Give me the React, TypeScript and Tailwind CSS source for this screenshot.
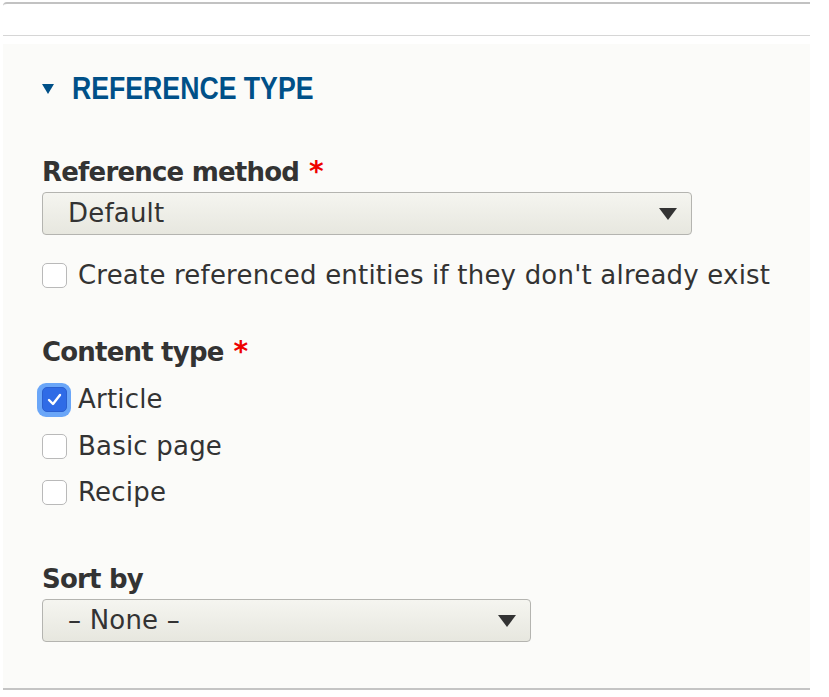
import React from 'react';

const font = { fontFamily: '"DejaVu Sans", Verdana, sans-serif' };

function Checkbox({ checked }: { checked?: boolean }) {
  if (checked) {
    return (
      <span className="flex h-[34px] w-[34px] shrink-0 items-center justify-center rounded-[9px] bg-[#6aa6f8] -ml-[5px] -mr-[4px]">
        <span className="flex h-[25px] w-[25px] items-center justify-center rounded-[5px] bg-[#2f6be6] border border-[#2a5fd0]">
          <svg width="15" height="13" viewBox="0 0 15 13">
            <path d="M2 7 L6 11 L13 2" fill="none" stroke="#fff" strokeWidth="2.4" strokeLinecap="round" strokeLinejoin="round" />
          </svg>
        </span>
      </span>
    );
  }
  return <span className="h-[25px] w-[25px] shrink-0 rounded-[5px] border border-[#b9b9b9] bg-white" />;
}

function Select({ value, width }: { value: string; width: string }) {
  return (
    <div className={`mt-[4px] flex h-[43px] items-center justify-between rounded-[4px] border border-[#b4b4b0] bg-gradient-to-b from-[#f5f5f0] to-[#e7e7df] pl-[25px] pr-[14px] ${width}`}>
      <span className="text-[26px] tracking-[0.2px] text-[#333]">{value}</span>
      <svg width="18" height="12" viewBox="0 0 18 12">
        <path d="M0 0 H18 L9 12 Z" fill="#333" />
      </svg>
    </div>
  );
}

function Label({ text, required }: { text: string; required?: boolean }) {
  return (
    <div className="flex items-center gap-[10px] text-[26px] font-bold tracking-[-0.8px] text-[#333] leading-[32px]">
      <span>{text}</span>
      {required && <span className="text-[#e00] text-[28px]">*</span>}
    </div>
  );
}

function Option({ label, checked }: { label: string; checked?: boolean }) {
  return (
    <div className="flex items-center gap-[11px] h-[33px] text-[26px] tracking-[0.2px] text-[#333]">
      <Checkbox checked={checked} />
      <span>{label}</span>
    </div>
  );
}

export default function App() {
  return (
    <div className="w-[829px] h-[697px] bg-white pt-[2px] pl-[3px] overflow-hidden" style={font}>
      <div className="w-[807px] h-[34px] border-t-2 border-[#c2c2c2] rounded-tl-[4px] border-b border-b-[#d6d6d6]" />
      <div className="w-[807px] mt-[8px] h-[646px] bg-[#fbfbf9] border-b-2 border-[#c4c4c4] pl-[39px] pt-[30px]">
        {/* Summary */}
        <div className="flex items-center gap-[18px] h-[30px] text-[#005088]">
          <svg width="12" height="10" viewBox="0 0 12 10">
            <path d="M0 0 H12 L6 10 Z" fill="#005088" />
          </svg>
          <span className="inline-block origin-left scale-x-[0.86] whitespace-nowrap text-[31px] font-bold" style={{ fontFamily: '"Liberation Sans", Arial, sans-serif' }}>
            REFERENCE TYPE
          </span>
        </div>

        <div className="mt-[52px]">
          <Label text="Reference method" required />
          <Select value="Default" width="w-[650px]" />
          <div className="mt-[24px]">
            <Option label="Create referenced entities if they don't already exist" />
          </div>
        </div>

        <div className="mt-[44px]">
          <Label text="Content type" required />
          <div className="mt-[15px] flex flex-col gap-[13.5px]">
            <Option label="Article" checked />
            <Option label="Basic page" />
            <Option label="Recipe" />
          </div>
        </div>

        <div className="mt-[54px]">
          <Label text="Sort by" />
          <Select value="– None –" width="w-[489px]" />
        </div>
      </div>
    </div>
  );
}
